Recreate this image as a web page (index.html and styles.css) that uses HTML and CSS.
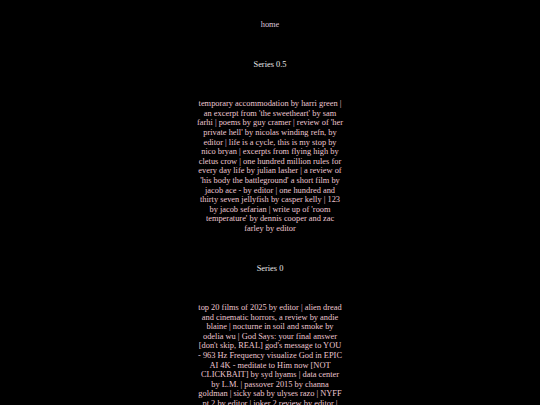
FILE: index.html
```html
<!DOCTYPE html>
<html>
<head>
<meta charset="utf-8">
<title>home</title>
<link rel="stylesheet" href="styles.css">
</head>
<body>
<main class="page">
  <a class="home" href="#">home</a>
  <h2 class="series">Series 0.5</h2>
  <p class="list">temporary accommodation by harri green | an excerpt from 'the sweetheart' by sam farhi | poems by guy cramer | review of 'her private hell' by nicolas winding refn, by editor | life is a cycle, this is my stop by nico bryan | excerpts from flying high by cletus crow | one hundred million rules for every day life by julian lasher | a review of 'his body the battleground' a short film by jacob ace - by editor | one hundred and thirty seven jellyfish by casper kelly | 123 by jacob sefarian | write up of 'room temperature' by dennis cooper and zac farley by editor</p>
  <h2 class="series">Series 0</h2>
  <p class="list">top 20 films of 2025 by editor | alien dread and cinematic horrors, a review by andie blaine | nocturne in soil and smoke by odelia wu | God Says: your final answer [don't skip, REAL] god's message to YOU - 963 Hz Frequency visualize God in EPIC AI 4K - meditate to Him now [NOT CLICKBAIT] by syd hyams | data center by L.M. | passover 2015 by channa goldman | sicky sab by ulyses razo | NYFF pt 2 by editor | joker 2 review by editor |</p>
</main>
</body>
</html>
```
FILE: styles.css
```css
html, body {
  margin: 0;
  padding: 0;
  background: #000;
}
.page {
  display: flex;
  flex-direction: column;
  align-items: center;
  gap: 30px;
  padding-top: 20px;
  font-family: "Liberation Serif", "Times New Roman", serif;
  font-size: 8.4px;
  line-height: 9.6px;
  text-align: center;
}
.home {
  color: #dcc4dc;
  text-decoration: none;
}
.series {
  margin: 0;
  font-size: 8.4px;
  font-weight: normal;
  color: #e8e8e8;
}
.list {
  margin: 0;
  width: 147px;
  color: #ecc6d0;
}
```
